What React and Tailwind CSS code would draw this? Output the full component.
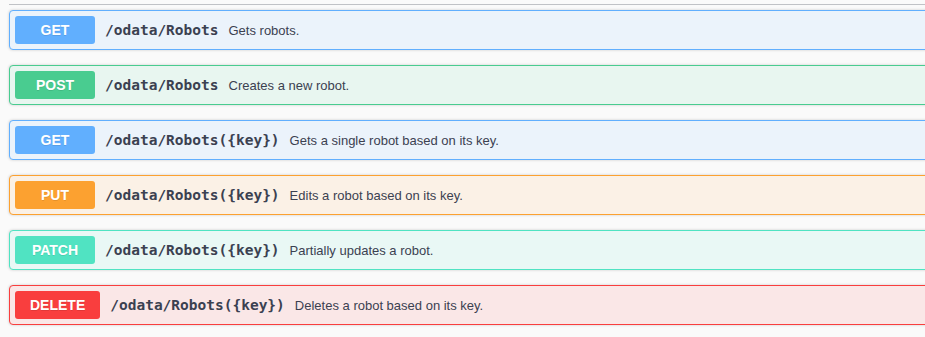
const ops = [
  { method: "GET", path: "/odata/Robots", desc: "Gets robots.", card: "bg-[#ebf3fb] border-[#61affe]", badge: "bg-[#61affe]" },
  { method: "POST", path: "/odata/Robots", desc: "Creates a new robot.", card: "bg-[#e8f6f0] border-[#49cc90]", badge: "bg-[#49cc90]" },
  { method: "GET", path: "/odata/Robots({key})", desc: "Gets a single robot based on its key.", card: "bg-[#ebf3fb] border-[#61affe]", badge: "bg-[#61affe]" },
  { method: "PUT", path: "/odata/Robots({key})", desc: "Edits a robot based on its key.", card: "bg-[#fbf1e6] border-[#fca130]", badge: "bg-[#fca130]" },
  { method: "PATCH", path: "/odata/Robots({key})", desc: "Partially updates a robot.", card: "bg-[#e9f8f5] border-[#50e3c2]", badge: "bg-[#50e3c2]" },
  { method: "DELETE", path: "/odata/Robots({key})", desc: "Deletes a robot based on its key.", card: "bg-[#fae7e7] border-[#f93e3e]", badge: "bg-[#f93e3e]" },
]

function OpBlock({ op }) {
  return (
    <div
      className={`flex items-center h-[40px] p-[5px] mb-[15px] border rounded-[4px] shadow-[0_0_3px_rgba(0,0,0,0.19)] ${op.card}`}
    >
      <div
        className={`min-w-[80px] h-[28px] px-[15px] flex items-center justify-center rounded-[3px] text-white font-bold text-[14px] [text-shadow:0_1px_0_rgba(0,0,0,0.1)] ${op.badge}`}
        style={{ fontFamily: "'Liberation Sans', Arial, sans-serif" }}
      >
        {op.method}
      </div>
      <span
        className="ml-[10px] mt-[2px] text-[14.5px] font-bold text-[#3b4151]"
        style={{ fontFamily: "'DejaVu Sans Mono', monospace" }}
      >
        {op.path}
      </span>
      <span
        className="ml-[10px] mt-[2px] text-[13px] text-[#3b4151]"
        style={{ fontFamily: "'Liberation Sans', Arial, sans-serif" }}
      >
        {op.desc}
      </span>
    </div>
  )
}

export default function App() {
  return (
    <div className="w-[925px] h-[337px] overflow-hidden bg-[#fafafa]">
      <div className="w-[960px] pl-[9px]">
        {/* tag header underline */}
        <div className="h-[5px] border-b border-[#3b4151]/30 mb-[5px]" />
        {ops.map((op, i) => (
          <OpBlock key={i} op={op} />
        ))}
      </div>
    </div>
  )
}
